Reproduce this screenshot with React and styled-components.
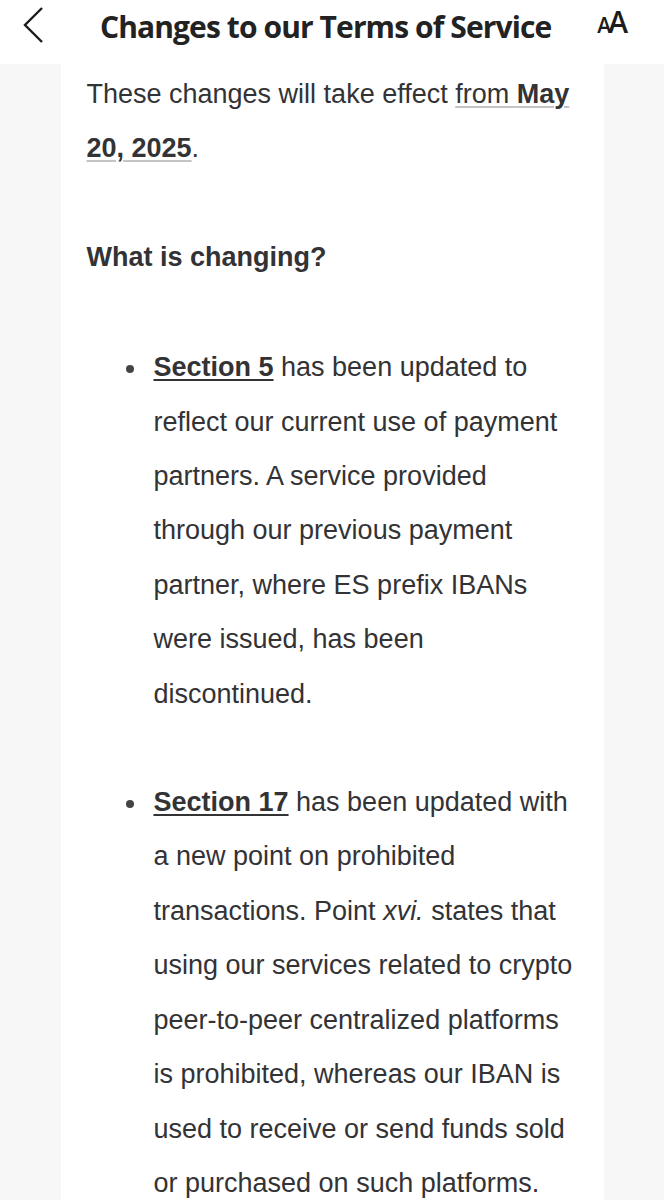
import React from "react";
import styled, { createGlobalStyle } from "styled-components";

const Global = createGlobalStyle`
  html, body {
    margin: 0;
    padding: 0;
    background: #f7f7f7;
  }
  * { box-sizing: border-box; }
`;

const Header = styled.header`
  height: 64px;
  background: #fff;
  display: flex;
  align-items: center;
  padding: 0 36px 0 22px;
`;

const BackButton = styled.button`
  border: 0;
  background: none;
  padding: 0;
  width: 26px;
  height: 40px;
  display: flex;
  align-items: center;
  color: #1c1c1e;
  margin-top: -14px;
`;

const Title = styled.h1`
  flex: 1;
  margin: -11px 0 0 6px;
  text-align: center;
  font-family: "Open Sans", "Noto Sans", sans-serif;
  font-weight: 700;
  font-size: 30px;
  font-stretch: 90%;
  letter-spacing: -0.9px;
  color: #222;
`;

const TextSize = styled.div`
  display: flex;
  align-items: baseline;
  font-family: "Open Sans", sans-serif;
  color: #1c1c1e;
  margin-top: -20px;
  line-height: 1;
`;

const Letter = styled.span`
  font-size: ${(p) => p.size}px;
  font-weight: 600;
  margin-left: ${(p) => p.shift || 0}px;
`;

const Panel = styled.main`
  width: 543px;
  margin: 0 auto;
  background: #fff;
  padding: 3px 25px 0 26px;
  font-family: "Liberation Sans", Arial, sans-serif;
  font-size: 27px;
  line-height: 54.4px;
  color: #333336;
`;

const Para = styled.p`
  margin: 0 0 54px;
`;

const Heading = styled.h2`
  margin: 0 0 56px;
  font-size: inherit;
  font-weight: 700;
  line-height: inherit;
`;

const Link = styled.a`
  color: inherit;
  text-decoration: underline;
  text-decoration-color: #c4c4c4;
  text-decoration-thickness: 2px;
  text-underline-offset: 3px;
`;

const List = styled.ul`
  margin: 0;
  padding-left: 67px;
  list-style: none;
`;

const Item = styled.li`
  margin-bottom: 54px;

  &::before {
    content: "";
    display: inline-block;
    width: 8px;
    height: 8px;
    border-radius: 50%;
    background: #444;
    margin-left: -28px;
    margin-right: 20px;
    vertical-align: middle;
  }

  &:last-child {
    margin-bottom: 0;
  }
`;

const SectionRef = styled.a`
  color: inherit;
  font-weight: 700;
  text-decoration: underline;
  text-decoration-thickness: 2px;
  text-underline-offset: 3px;
`;

export default function App() {
  return (
    <>
      <Global />
      <Header>
        <BackButton aria-label="Back">
          <svg width="22" height="38" viewBox="0 0 22 38" fill="none">
            <path d="M20 2 L3 19 L20 36" stroke="currentColor" strokeWidth="2.4" />
          </svg>
        </BackButton>
        <Title>Changes to our Terms of Service</Title>
        <TextSize aria-label="Text size">
          <Letter size={21}>A</Letter>
          <Letter size={30} shift={-3}>A</Letter>
        </TextSize>
      </Header>
      <Panel>
        <Para>
          These changes will take effect{" "}
          <Link href="#">
            from <b>May 20, 2025</b>
          </Link>
          .
        </Para>
        <Heading>What is changing?</Heading>
        <List>
          <Item>
            <SectionRef href="#">Section 5</SectionRef> has been updated to reflect our current use of
            payment partners. A service provided through our previous payment partner, where ES prefix
            IBANs were issued, has been discontinued.
          </Item>
          <Item>
            <SectionRef href="#">Section 17</SectionRef> has been updated with a new point on prohibited
            transactions. Point <i>xvi.</i> states that using our services related to crypto peer-to-peer
            centralized platforms is prohibited, whereas our IBAN is used to receive or send funds sold or
            purchased on such platforms.
          </Item>
        </List>
      </Panel>
    </>
  );
}
